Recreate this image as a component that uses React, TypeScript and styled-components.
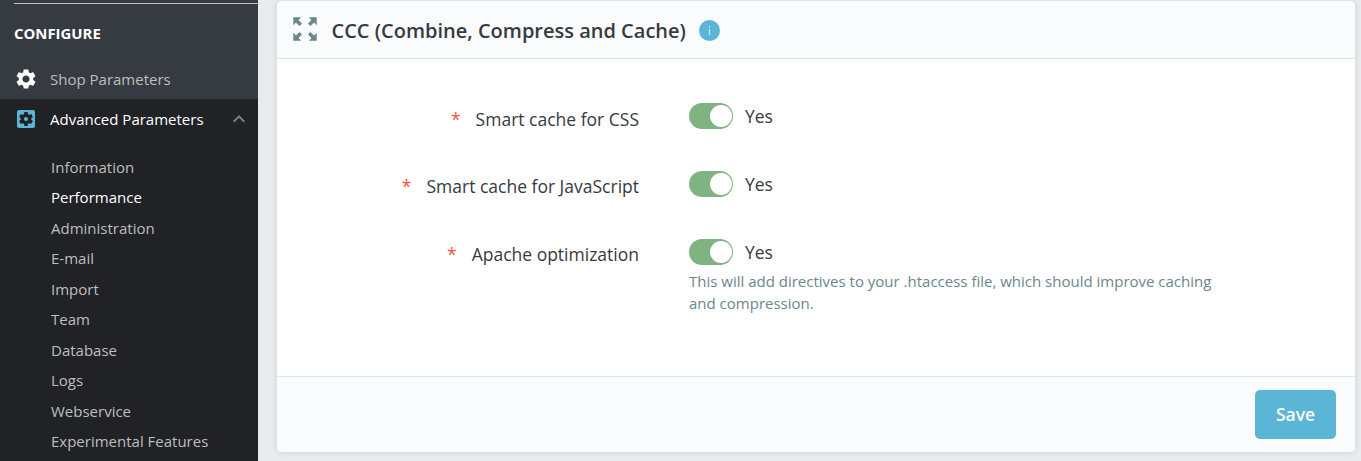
import React from "react";
import styled, { createGlobalStyle } from "styled-components";
import {
  MdSettings,
  MdSettingsApplications,
  MdKeyboardArrowUp,
} from "react-icons/md";

const GlobalStyle = createGlobalStyle`
  *, *::before, *::after { box-sizing: border-box; }
  body {
    margin: 0;
    background: #eaebec;
    color: #363a41;
    font-family: "Open Sans", "Noto Sans", sans-serif;
    overflow: hidden;
  }
`;

const Page = styled.div`
  display: flex;
  width: 1361px;
  height: 461px;
  overflow: hidden;
`;

const Sidebar = styled.nav`
  width: 258px;
  flex: none;
  background: #363a41;
  display: flex;
  flex-direction: column;
`;

const Divider = styled.div`
  height: 1px;
  margin: 3px 0 0 14px;
  flex: none;
  background: #bec0c3;
`;

const SectionTitle = styled.div`
  height: 55px;
  padding: 2px 0 0 14px;
  line-height: 55px;
  font-size: 14.9px;
  font-weight: 700;
  color: #fff;
`;

const MenuItem = styled.div<{ $open?: boolean }>`
  height: 40px;
  flex: none;
  display: flex;
  align-items: center;
  padding: 0 7px 0 14px;
  font-size: 15px;
  color: ${(p) => (p.$open ? "#fff" : "#bebebe")};
  background: ${(p) => (p.$open ? "#202226" : "transparent")};

  svg { flex: none; }
`;

const MenuLabel = styled.span`
  flex: 1;
  margin-left: 12px;
  white-space: nowrap;
`;

const Submenu = styled.ul`
  flex: 1;
  margin: 0;
  padding: 13px 0 0 51px;
  list-style: none;
  background: #202226;
`;

const SubmenuItem = styled.li<{ $active?: boolean }>`
  height: 30.45px;
  line-height: 30px;
  font-size: 15px;
  white-space: nowrap;
  color: ${(p) => (p.$active ? "#fff" : "#bebebe")};
`;

const Main = styled.main`
  flex: 1;
  padding: 0 5px 8px 18px;
`;

const Card = styled.section`
  height: 453px;
  display: flex;
  flex-direction: column;
  background: #fff;
  border: 1px solid #dbe6e9;
  border-radius: 6px;
  box-shadow: 0 0 5px rgba(0, 0, 0, 0.1);
  overflow: hidden;
`;

const CardHeader = styled.header`
  height: 58px;
  flex: none;
  display: flex;
  align-items: center;
  padding: 0 16px;
  background: #fafbfc;
  border-bottom: 1px solid #dbe6e9;
`;

const ExpandIcon = styled.svg`
  flex: none;
  width: 24px;
  height: 24px;
  margin-bottom: 1px;
  fill: #6c868e;
`;

const CardTitle = styled.h3`
  margin: 0 13px 0 14.5px;
  padding-top: 2px;
  font-size: 20px;
  font-weight: 600;
  white-space: nowrap;
`;

const InfoBadge = styled.svg`
  width: 21px;
  height: 21px;
  margin-top: 1px;
`;

const CardBody = styled.div`
  flex: 1;
  padding-top: 43px;
`;

const FormRow = styled.div`
  display: grid;
  grid-template-columns: 362px 1fr;
  column-gap: 50px;
  min-height: 68px;
`;

const FieldLabel = styled.label<{ $raised?: boolean }>`
  padding-top: ${(p) => (p.$raised ? 4 : 5)}px;
  text-align: right;
  font-size: 17.5px;
  line-height: 24px;
  white-space: nowrap;
`;

const Required = styled.span`
  margin-right: 15px;
  color: #f0563c;
`;

const SwitchLine = styled.div`
  display: flex;
  align-items: center;
  gap: 12px;
  height: 28px;
  font-size: 17.5px;
`;

const Switch = styled.span`
  display: flex;
  align-items: center;
  justify-content: flex-end;
  width: 44px;
  height: 26px;
  padding-right: 1.5px;
  border-radius: 13px;
  background: #80b382;

  &::after {
    content: "";
    width: 22px;
    height: 22px;
    border-radius: 50%;
    background: #fff;
  }
`;

const HelpText = styled.p`
  width: 540px;
  margin: 4px 0 0;
  font-size: 15px;
  line-height: 22px;
  color: #6c868e;
`;

const CardFooter = styled.footer`
  height: 76px;
  flex: none;
  display: flex;
  justify-content: flex-end;
  align-items: center;
  padding-right: 19px;
  background: #fafbfc;
  border-top: 1px solid #dbe6e9;
`;

const SaveButton = styled.button`
  width: 81px;
  height: 49px;
  padding: 0 0 2px;
  border: 0;
  border-radius: 5px;
  background: #5ab5d6;
  color: #fff;
  font: 600 17.5px "Open Sans", "Noto Sans", sans-serif;
`;

const pages = [
  "Information",
  "Performance",
  "Administration",
  "E-mail",
  "Import",
  "Team",
  "Database",
  "Logs",
  "Webservice",
  "Experimental Features",
];

const fields = [
  { label: "Smart cache for CSS" },
  { label: "Smart cache for JavaScript" },
  {
    label: "Apache optimization",
    help: "This will add directives to your .htaccess file, which should improve caching and compression.",
  },
];

export default function App() {
  return (
    <>
      <GlobalStyle />
      <Page>
        <Sidebar>
          <Divider />
          <SectionTitle>CONFIGURE</SectionTitle>
          <MenuItem>
            <MdSettings size={24} color="#fff" />
            <MenuLabel>Shop Parameters</MenuLabel>
          </MenuItem>
          <MenuItem $open>
            <MdSettingsApplications size={24} color="#5ab5d6" />
            <MenuLabel>Advanced Parameters</MenuLabel>
            <MdKeyboardArrowUp size={24} color="#6c868e" />
          </MenuItem>
          <Submenu>
            {pages.map((page) => (
              <SubmenuItem key={page} $active={page === "Performance"}>
                {page}
              </SubmenuItem>
            ))}
          </Submenu>
        </Sidebar>
        <Main>
          <Card>
            <CardHeader>
              <ExpandIcon viewBox="0 0 24 24">
                {[0, 90, 180, 270].map((angle) => (
                  <path
                    key={angle}
                    transform={`rotate(${angle} 12 12)`}
                    d="M.3.3h7.9L5.5 3 9 6.5 6.5 9 3 5.5.3 8.2z"
                  />
                ))}
              </ExpandIcon>
              <CardTitle>CCC (Combine, Compress and Cache)</CardTitle>
              <InfoBadge viewBox="0 0 21 21">
                <circle cx="10.5" cy="10.5" r="10.5" fill="#5ab5d6" />
                <path d="M10.5 6v1.4M10.5 9v6" stroke="#c4e4f0" strokeWidth="1.3" />
              </InfoBadge>
            </CardHeader>
            <CardBody>
              {fields.map((field, index) => (
                <FormRow key={field.label}>
                  <FieldLabel $raised={index > 0}>
                    <Required>*</Required>
                    {field.label}
                  </FieldLabel>
                  <div>
                    <SwitchLine>
                      <Switch />
                      <span>Yes</span>
                    </SwitchLine>
                    {field.help && <HelpText>{field.help}</HelpText>}
                  </div>
                </FormRow>
              ))}
            </CardBody>
            <CardFooter>
              <SaveButton type="button">Save</SaveButton>
            </CardFooter>
          </Card>
        </Main>
      </Page>
    </>
  );
}
